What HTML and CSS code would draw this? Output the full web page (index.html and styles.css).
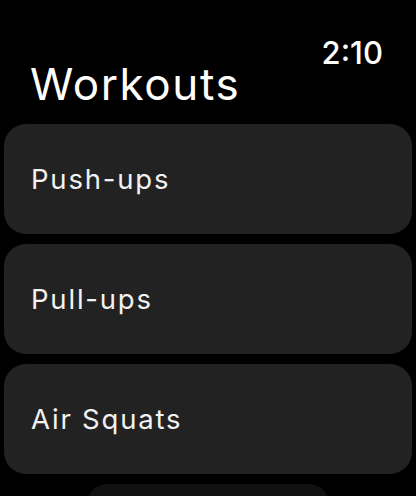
FILE: index.html
```html
<!DOCTYPE html>
<html lang="en">
<head>
<meta charset="utf-8">
<title>Workouts</title>
<link rel="stylesheet" href="styles.css">
</head>
<body>
<div class="screen">
  <header class="header">
    <div class="time">2:10</div>
    <h1 class="title">Workouts</h1>
  </header>
  <ul class="list">
    <li class="card">Push-ups</li>
    <li class="card">Pull-ups</li>
    <li class="card">Air Squats</li>
  </ul>
  <div class="more"></div>
</div>
</body>
</html>
```
FILE: styles.css
```css
html, body {
  margin: 0;
  padding: 0;
  background: #000;
}
.screen {
  width: 416px;
  height: 496px;
  overflow: hidden;
  background: #000;
  color: #fff;
  font-family: Inter, "Noto Sans", sans-serif;
  display: flex;
  flex-direction: column;
}
.header {
  display: flex;
  flex-direction: column;
  padding: 40px 0 0 0;
}
.time {
  align-self: flex-end;
  margin-right: 33px;
  font-size: 31px;
  line-height: 25px;
  font-weight: 500;
}
.title {
  margin: 0;
  padding-left: 30px;
  font-size: 44px;
  line-height: 38px;
  font-weight: 400;
  letter-spacing: 1.6px;
}
.list {
  list-style: none;
  margin: 21px 0 0 0;
  padding: 0 4px;
  display: flex;
  flex-direction: column;
  gap: 10px;
}
.card {
  height: 110px;
  border-radius: 22px;
  background: #222222;
  display: flex;
  align-items: center;
  padding-left: 27px;
  font-size: 27.5px;
  color: #f2f2f2;
  letter-spacing: 1.8px;
}
.more {
  flex: none;
  align-self: center;
  margin-top: 10px;
  width: 242px;
  height: 40px;
  border-radius: 20px;
  background: #111111;
}
```
